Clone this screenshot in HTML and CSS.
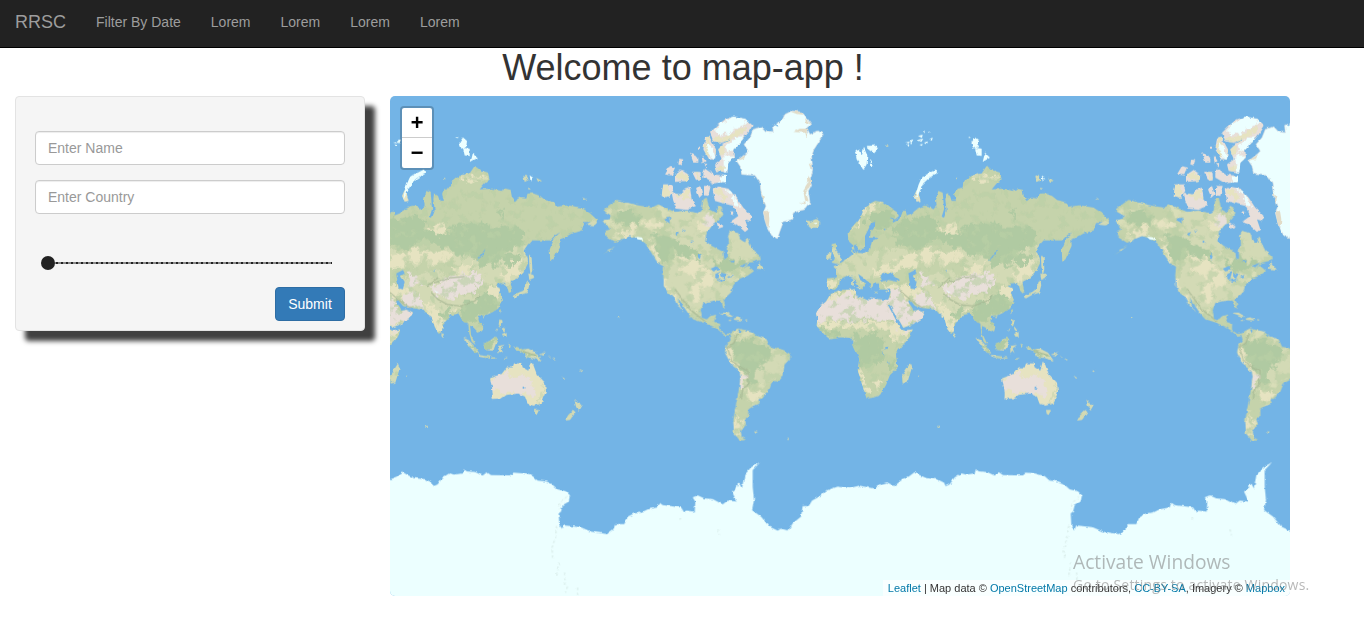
FILE: index.html
```html
<!DOCTYPE html>
<html lang="en">
<head>
<meta charset="utf-8">
<title>map-app</title>
<link rel="stylesheet" href="styles.css">
</head>
<body>
<nav class="navbar">
  <a class="brand">RRSC</a>
  <a class="nav-link">Filter By Date</a>
  <a class="nav-link">Lorem</a>
  <a class="nav-link">Lorem</a>
  <a class="nav-link">Lorem</a>
  <a class="nav-link">Lorem</a>
</nav>
<h1 class="title">Welcome to map-app !</h1>
<main class="content">
  <form class="well">
    <input class="field" type="text" placeholder="Enter Name">
    <input class="field" type="text" placeholder="Enter Country">
    <div class="slider"><div class="track"></div><div class="thumb"></div></div>
    <div class="actions"><button class="submit" type="button">Submit</button></div>
  </form>
  <section class="map">
    <svg class="world" width="900" height="500" viewBox="0 0 2700 1500">
      <defs>
        <filter id="coast" filterUnits="userSpaceOnUse" x="-30" y="-30" width="2760" height="1560" color-interpolation-filters="sRGB">
          <feTurbulence type="fractalNoise" baseFrequency="0.07" numOctaves="2" seed="4"/>
          <feDisplacementMap in="SourceGraphic" scale="10" xChannelSelector="R" yChannelSelector="G"/>
        </filter>
        <filter id="terrain" filterUnits="userSpaceOnUse" x="-100" y="100" width="1300" height="1000" color-interpolation-filters="sRGB">
          <feTurbulence type="fractalNoise" baseFrequency="0.04" numOctaves="4" seed="9"/>
          <feDisplacementMap in="SourceGraphic" scale="50" xChannelSelector="R" yChannelSelector="G"/>
        </filter>
        <filter id="islandTerrain" filterUnits="userSpaceOnUse" x="150" y="30" width="400" height="420" color-interpolation-filters="sRGB">
          <feTurbulence type="fractalNoise" baseFrequency="0.07" numOctaves="2" seed="3"/>
          <feDisplacementMap in="SourceGraphic" scale="20" xChannelSelector="R" yChannelSelector="G"/>
        </filter>
        <filter id="speckle" filterUnits="userSpaceOnUse" x="-50" y="180" width="1050" height="900" color-interpolation-filters="sRGB">
          <feTurbulence type="fractalNoise" baseFrequency="0.03" numOctaves="4" seed="21"/>
          <feColorMatrix values="0 0 0 0 .85  0 0 0 0 .87  0 0 0 0 .72  9 0 0 0 -4.95"/>
        </filter>
        <filter id="speckleGreen" filterUnits="userSpaceOnUse" x="-50" y="180" width="1050" height="900" color-interpolation-filters="sRGB">
          <feTurbulence type="fractalNoise" baseFrequency="0.035" numOctaves="4" seed="5"/>
          <feColorMatrix values="0 0 0 0 .73  0 0 0 0 .81  0 0 0 0 .65  9 0 0 0 -5"/>
        </filter>
        <path id="america" d="M40 345L55 330L80 312L110 320L145 328L185 335L205 325L225 335L255 348L290 345L325 352L335 345L340 310L350 305L358 340L375 350L385 330L395 335L400 355L385 375L365 390L350 410L345 435L365 450L400 468L402 488L412 490L412 455L418 445L415 420L420 405L445 412L450 430L465 440L472 425L480 445L490 465L510 480L512 492L480 500L462 516L474 510L492 525L472 540L450 547L430 567L425 587L400 610L408 638L400 634L392 614L370 614L340 620L332 642L335 665L350 670L362 660L378 657L372 677L390 684L390 702L405 714L420 712L430 704L445 697L485 707L500 720L530 730L540 752L580 762L600 774L600 787L582 807L580 842L545 862L535 887L515 909L505 909L508 922L490 930L475 940L475 962L462 970L468 985L452 1007L455 1024L468 1032L450 1034L432 1012L430 972L435 942L445 892L452 842L450 827L425 807L405 770L410 747L422 732L418 717L405 719L385 702L370 692L340 680L310 670L298 657L280 630L262 602L270 632L283 649L262 627L250 602L235 592L222 570L220 537L222 512L205 502L185 472L165 440L145 428L120 420L95 430L75 450L35 478L70 455L90 435L75 440L50 425L45 405L60 400L48 385L40 372L60 370L65 358Z"/>
        <path id="arctic" d="M360 110L385 85L405 70L430 62L465 68L488 88L475 110L450 140L430 160L432 185L415 200L412 230L380 225L375 205L395 190L385 160L400 145L370 135ZM345 125L358 122L378 160L375 190L358 190L340 160ZM340 230L345 218L370 235L408 240L408 258L370 262L340 245ZM225 235L240 210L255 215L245 238ZM255 235L275 222L298 238L290 255L255 258ZM220 265L245 265L250 285L235 305L215 300ZM245 290L270 295L285 280L300 275L305 310L318 330L290 342L260 338L250 315ZM318 280L330 270L338 295L328 305ZM342 270L362 270L355 300L342 298ZM368 280L385 272L415 278L440 305L460 335L485 360L480 375L465 370L475 400L465 408L440 385L420 378L445 360L430 330L400 322L375 315ZM380 378L402 392L385 398ZM300 170L325 185L325 200L310 200ZM268 188L280 190L275 208L265 205ZM306 228L332 228L332 250L318 252ZM335 178L347 195L338 202ZM324 152h6v6h-6ZM342 204L352 204L350 214ZM420 346L430 346L428 358Z"/>
        <path id="greenland" d="M440 195L465 175L475 165L462 145L480 125L490 100L515 92L530 108L550 110L548 88L575 75L585 55L605 45L635 48L650 65L665 85L650 95L660 115L685 105L700 115L685 140L672 160L665 180L668 225L660 250L665 265L655 285L660 320L645 340L610 350L605 370L580 378L570 405L562 428L545 418L530 390L520 350L528 330L515 300L510 260L495 238L455 235L450 210Z"/>
        <path id="antilles" d="M648 372L662 376L680 368L692 380L680 395L660 396ZM514 484L508 500L525 522L500 518ZM388 650L410 650L430 662L420 663L405 656ZM430 668L442 664L458 669L452 673L434 672ZM466 670h6v3h-6ZM416 672h8v3h-8ZM492 1006L504 1007L496 1012ZM592 1026h5v3h-5ZM84 662h4v4h-4ZM50 462L66 458L58 464ZM-12 386L2 378L14 372L22 380L10 388Z"/>
        <path id="eurasia" d="M143 410L160 392L180 368L190 345L205 325L225 315L248 318L270 335L290 348L297 360L285 370L268 362L280 380L295 372L305 360L308 345L318 345L320 358L335 352L350 340L372 330L385 330L400 340L410 330L408 310L415 285L428 290L430 310L432 340L425 362L432 365L440 345L436 310L438 293L450 300L455 315L468 315L463 295L470 278L488 275L490 258L515 240L545 232L560 210L575 222L600 230L605 250L590 262L575 280L610 278L640 285L650 277L668 282L672 305L680 315L695 305L715 308L719 293L736 292L756 300L771 312L801 320L804 332L841 328L881 335L906 352L928 372L921 388L906 378L889 378L881 403L851 412L826 426L814 430L815 450L796 490L787 497L785 460L800 425L818 408L801 418L786 433L731 433L716 450L706 465L718 480L720 502L706 530L691 544L667 557L673 587L663 592L657 570L646 560L631 562L624 572L640 578L632 590L641 612L631 637L606 652L589 659L574 659L571 672L586 692L583 705L571 710L556 694L546 690L549 717L563 747L551 737L544 712L541 682L526 677L511 652L491 657L466 682L461 707L453 714L441 697L431 662L416 652L406 640L366 636L345 630L330 612L324 616L336 634L340 644L355 642L375 650L365 667L340 684L310 695L300 677L280 647L270 625L264 628L285 667L300 697L312 704L338 700L330 722L305 752L288 772L292 817L270 837L258 867L240 897L222 904L200 907L190 877L173 822L178 787L160 747L160 730L140 724L120 724L90 730L70 712L50 690L52 667L48 652L60 632L78 617L92 594L120 582L165 580L165 597L205 614L215 604L235 610L265 612L272 587L270 580L240 580L235 562L222 562L215 577L205 557L190 544L174 533L180 552L195 564L185 580L172 562L158 544L140 540L120 550L118 567L105 580L82 580L80 547L110 544L112 524L100 512L120 502L140 490L158 475L155 452L160 448L145 435Z"/>
        <path id="ausislands" d="M606 847L641 834L656 814L674 814L678 802L701 802L704 814L721 824L728 797L736 807L746 834L771 860L774 887L761 922L736 929L718 922L711 902L691 892L656 897L641 907L614 909L614 882Z"/>
        <path id="islands" d="M95 445L108 442L108 460L115 475L125 490L115 502L95 500L105 485L98 470ZM80 475L95 468L92 488L78 490ZM723 475L731 485L733 520L728 540L724 510ZM721 532L736 537L739 545L724 552ZM718 554L724 567L718 590L696 597L678 607L674 600L691 590L706 584ZM633 642L639 640L636 652ZM634 670L644 674L638 694L632 686ZM642 714L656 708L656 722L646 722ZM642 694L652 698L650 706L644 702ZM626 702L632 695L626 708ZM586 662L593 660L588 668ZM461 710L468 718L464 725L460 720ZM526 725L541 732L561 752L574 772L561 770L546 754ZM571 777L606 782L606 788L576 783ZM610 784h12v4h-12ZM648 788L660 784L650 792ZM586 744L606 734L621 722L628 732L616 764L591 762ZM631 750L651 747L638 757L644 772L637 764L631 772ZM662 742L668 748L664 756ZM678 752L691 754L696 762L721 758L744 770L761 794L736 787L711 782L706 770L684 762ZM752 776L774 768L764 778ZM780 778l8 4l-2 3ZM792 786l12 5l-4 2ZM820 838L832 846L828 848ZM876 826L886 820L882 828ZM738 942L753 942L746 957L740 954ZM859 910L868 920L881 927L871 944L864 932ZM856 942L863 949L846 972L831 974L841 957ZM330 802L335 817L322 860L308 862L306 840ZM157 548h4l1 20h-6ZM168 576L184 574L180 582ZM222 588h12v3h-12ZM254 588L266 584L260 592ZM884 312L890 306L898 310ZM706 240L715 236L722 252L710 258ZM745 246L762 255L750 257ZM720 275L730 278L722 281ZM412 990h8v4h-8ZM354 840h4v2h-4ZM468 246h4v4h-4ZM256 148h6v4h-6ZM640 280h3v3h-3Z"/>
        <path id="ice" d="M165 165L180 158L185 180L192 155L202 178L200 205L190 222L180 205L170 190ZM200 150L225 148L235 158L222 172L205 160ZM210 190L222 208L215 212ZM346 312L350 285L356 265L365 245L385 232L408 220L412 230L385 248L370 262L360 285ZM514 140L525 124L537 135L535 152L520 158ZM525 155L545 158L545 180L530 178ZM555 170L570 185L548 198ZM315 140L330 136L326 142ZM330 132L340 130L333 144ZM318 148L328 144L326 152ZM354 120L368 116L366 126ZM352 132L370 128L364 138ZM372 140L384 136L380 146ZM388 130L398 124L396 134ZM358 146L368 144L366 150ZM370 104h4v4h-4ZM388 108h5v3h-5ZM506 123h5v3h-5ZM725 238L736 246L728 256Z"/>
        <clipPath id="clipAm"><use href="#america"/></clipPath>
        <clipPath id="clipEu"><use href="#eurasia"/><use href="#islands"/></clipPath>
        <clipPath id="clipAus"><use href="#ausislands"/></clipPath>
        <clipPath id="clipIsl"><use href="#arctic"/></clipPath>

        <g id="west">
          <use href="#america" class="plain"/>
          <g clip-path="url(#clipAm)">
            <rect width="700" height="1100" filter="url(#speckle)"/>
            <g filter="url(#terrain)">
              <path class="meadow" d="M230 350L345 335L360 460L300 480L240 420ZM400 400L500 440L500 500L400 500ZM230 500L340 490L440 550L410 600L330 640L230 600ZM520 750L600 790L580 850L480 860Z"/>
              <path class="sand" d="M262 475L300 465L340 500L370 550L355 575L320 560L270 520ZM330 350L380 390L345 430L320 400ZM300 575L330 560L325 620L300 605ZM222 540L250 590L290 650L270 640L225 580ZM470 885L520 880L510 930L480 930ZM428 960L445 970L445 1020L430 1010ZM155 375L200 380L210 400L170 390ZM95 400L140 390L130 415L95 420ZM170 430L190 440L220 500L200 500ZM410 740L440 800L475 840L450 900L445 830L405 790Z"/>
              <path class="forest" d="M80 350L120 340L150 360L140 385L95 390L75 375ZM180 420L230 420L300 460L340 470L330 500L260 470L230 500L210 480ZM355 490L450 490L470 510L400 530ZM425 750L450 725L500 740L540 760L530 800L490 830L500 860L475 865L470 830L435 800Z"/>
              <path class="desert" d="M450 832L466 835L464 870L452 880ZM340 355L378 355L370 385L345 380Z"/>
            </g>
            <rect class="faint" width="700" height="700" filter="url(#speckleGreen)"/>
            <path class="range" d="M442 712L432 740L412 755L425 795L445 810L474 826L472 870L458 876L454 910M255 580L300 640L345 676"/>
          </g>
          <use href="#arctic" class="desert"/>
          <g clip-path="url(#clipIsl)"><g filter="url(#islandTerrain)">
            <path class="sand" d="M360 125L400 125L440 105L470 90L460 110L400 140L370 135ZM345 125L360 125L365 190L345 175ZM255 230L300 230L300 260L260 250ZM215 265L235 265L240 310L210 300ZM260 290L300 280L300 300L280 310ZM380 150L405 150L402 175L380 180ZM370 280L390 275L410 300L400 320L390 300ZM312 228L325 228L330 250ZM380 215L405 210L400 228L380 225Z"/>
            <path class="ice" d="M375 105L395 80L430 60L475 72L465 88L430 100L415 118L400 110L390 122ZM440 125L465 120L440 160L405 172L415 145ZM400 178L432 178L418 205L412 235L402 225ZM350 140L370 155L375 188L358 190ZM388 240L412 238L410 262L390 260ZM425 300L435 300L450 335L435 330ZM403 278L420 280L428 295L415 290Z"/>
          </g></g>
          <path class="strait" d="M362 135Q400 150 420 130"/>
          <use href="#greenland" class="ice fringe"/>
          <path class="shore" d="M440 195L468 175L462 188ZM514 285L524 305L522 330ZM520 345L534 345L538 370L536 395L528 385ZM656 202L668 210L664 224ZM654 240L663 250L660 270L648 290L656 315L646 318L640 285L655 260ZM600 46L635 48L640 56L620 54ZM645 66L665 85L648 80ZM655 98L650 125L646 110L610 108L630 98ZM630 320L645 316L648 325Z"/>
          <use href="#antilles" class="meadow"/>
          <path class="ice" d="M670 382l12-2l-4 8ZM135 422l20 2l6 8l-18-2Z"/>
          <path class="sea" d="M222 372L232 366L246 366L238 374L240 382L230 376ZM256 412L268 408L260 420ZM276 404L288 402L278 408ZM324 474L332 480L330 490L324 484ZM302 434h5v6h-5ZM362 518L380 510L390 522L370 526ZM376 534L390 528L384 554L376 548ZM393 530L410 534L402 548L394 540ZM382 553L404 548L408 552L392 558ZM412 542L428 537L426 543L414 546ZM418 496L434 493L432 500ZM448 510L474 500L460 514ZM445 700L452 700L448 712ZM530 92L538 92L542 106L534 106ZM552 78L562 84L566 92L556 88Z"/>
        </g>

        <g id="east">
          <use href="#eurasia" class="plain"/>
          <use href="#islands" class="meadow"/>
          <g clip-path="url(#clipEu)">
            <g filter="url(#terrain)">
              <path class="meadow" d="M100 480L300 460L400 480L450 460L720 450L720 560L560 560L520 500L300 510L200 560L110 540ZM350 545L460 520L500 600L600 590L600 640L400 640L340 590Z"/>
              <path class="sand" d="M240 505L330 480L380 460L470 460L490 490L460 500L400 485L330 510L270 530L210 530ZM500 515L560 500L530 545L490 540ZM645 510L700 490L710 510L680 545L640 550ZM415 400L460 390L475 410L430 425ZM620 565L645 590L640 620L610 610L595 590ZM410 610L440 640L500 640L480 670L465 690L460 720L435 700L420 660ZM80 555L115 550L110 580L85 580ZM240 560L330 570L320 600L270 580ZM260 610L340 560L370 620L320 600ZM45 675L290 680L300 700L270 705L50 690ZM170 815L182 820L205 895L190 890ZM230 860L250 860L240 885ZM285 665L345 700L290 750L270 730ZM520 245L550 238L600 235L590 250L530 262ZM150 405L180 370L200 330L250 315L230 330L195 360L165 405Z"/>
              <path class="forest" d="M205 350L270 340L290 380L240 400L200 390ZM285 390L330 360L400 365L420 390L410 410L460 420L500 385L640 385L710 405L705 450L640 470L520 470L480 455L400 430L350 460L280 440ZM625 345L645 335L640 370ZM540 470L640 470L700 480L690 500L640 500L590 510L550 490ZM500 440L540 460L530 490L500 470ZM512 645L545 615L590 590L640 620L620 650L580 655L570 680L530 690ZM455 645L485 640L480 670L460 670ZM165 715L230 710L250 725L250 780L235 810L180 815L160 745ZM65 695L110 705L120 725L80 725ZM690 755L760 790L710 780ZM580 740L630 720L610 765ZM270 800L290 790L285 820L270 820ZM526 725L580 775L550 765Z"/>
              <path class="desert" d="M40 670L40 600L165 590L265 600L290 570L320 605L330 640L380 645L365 675L310 695L285 672L50 674ZM340 585L405 605L405 640L345 630ZM425 575L480 545L520 530L595 535L570 575L530 590L480 615L440 595ZM355 535L390 535L400 565L360 575ZM300 700L340 698L320 715Z"/>
              <path class="sand" d="M85 598L165 578L165 590L120 595L90 612Z"/>
            </g>
            <rect class="faint" width="1000" height="400" y="200" filter="url(#speckleGreen)"/>
            <path class="range" d="M430 590L450 610L480 626L520 630L560 615L575 600M440 560L490 545L530 542M415 575L450 545M300 585L345 622L370 637M700 765L745 778"/>
          </g>
          <use href="#ausislands" class="sand"/>
          <g clip-path="url(#clipAus)"><g filter="url(#terrain)">
            <path class="desert" d="M596 850L640 832L680 840L720 835L740 860L735 895L700 905L670 885L600 895Z"/>
            <path class="meadow" d="M770 870L776 900L760 930L745 925L765 895Z"/>
          </g></g>
          <path class="sand" d="M350 317L342 300L350 282L356 292L362 315ZM184 192h8v10h-8Z"/>
          <use href="#ice" class="ice"/>
          <path class="ice" d="M437 580l8 6l8 4l-8 0Z"/>
          <path class="sea" d="M215 376L226 375L222 392L212 405L210 425L236 425L216 435L210 460L190 472L172 470L176 462L195 456L195 420L205 400ZM160 448L170 445L175 462L168 472L164 460ZM240 547L250 530L262 536L280 530L278 538L297 552L290 557L265 552L245 558ZM325 532L345 522L350 532L338 540L350 557L345 580L332 577L328 552ZM592 458L586 478L565 494L580 476ZM256 752L266 750L264 758L256 760ZM246 765l4 16l-3-2ZM266 790l3 16l-4-4ZM436 526l5-6l-2 8ZM704 872h5v6h-5ZM158 460l6 0l0 10l-5 0ZM250 398l7 0l-2 6Z"/>
        </g>

        <g id="south">
          <path class="ice" d="M0 1150L22 1142L40 1128L55 1137L75 1146L108 1150L128 1160L133 1170L145 1165L160 1144L180 1132L195 1136L220 1132L224 1119L232 1126L258 1128L280 1139L292 1128L305 1137L362 1138L372 1130L400 1132L430 1140L445 1154L470 1156L485 1162L505 1180L530 1186L542 1198L538 1217L520 1227L515 1247L508 1252L510 1287L520 1300L525 1288L575 1294L605 1307L653 1314L672 1300L678 1284L705 1284L715 1262L735 1252L755 1250L775 1240L805 1234L810 1220L820 1227L875 1234L885 1250L890 1244L916 1247L918 1217L910 1204L925 1198L945 1207L970 1209L1000 1225L1015 1214L1042 1217L1028 1187L1040 1177L1048 1160L1058 1177L1065 1137L1085 1114L1112 1099L1090 1122L1090 1172L1094 1212L1088 1242L1115 1262L1140 1292L1165 1304L1175 1298L1197 1304L1210 1282L1235 1262L1240 1230L1258 1230L1268 1214L1290 1202L1310 1184L1345 1172L1380 1176L1410 1169L1455 1178L1475 1164L1493 1159L1515 1170L1540 1150V1540H0Z"/>
          <path class="ridge" d="M532 1202L512 1222L510 1240M502 1290L498 1325L488 1355L490 1385M508 1400L502 1440M526 1430L527 1460L535 1470L528 1490M565 1475V1498M986 1300L990 1318M870 1270L876 1266"/>
        </g>
      </defs>
      <rect class="sea" width="2700" height="1500"/>
      <g filter="url(#coast)">
        <use href="#east" x="-306"/>
        <use href="#west" x="600"/>
        <use href="#east" x="1230"/>
        <use href="#west" x="2136"/>
        <use href="#south" x="-2"/>
        <use href="#south" x="1534"/>
      </g>
    </svg>
    <div class="zoom"><a class="zoom-btn">+</a><a class="zoom-btn minus">−</a></div>
    <div class="attribution"><a>Leaflet</a> | Map data © <a>OpenStreetMap</a> contributors, <a>CC-BY-SA</a>, Imagery © <a>Mapbox</a></div>
  </section>
</main>
<aside class="activate"><div class="activate-title">Activate Windows</div><div class="activate-text">Go to Settings to activate Windows.</div></aside>
</body>
</html>
```
FILE: styles.css
```css
* { box-sizing: border-box; }
body {
  margin: 0;
  height: 627px;
  overflow: hidden;
  background: #fff;
  color: #333;
  font: 14px/20px "Liberation Sans", Arial, sans-serif;
}
.navbar {
  display: flex;
  height: 48px;
  padding-bottom: 3px;
  align-items: center;
  background: #222;
  border-bottom: 1px solid #000;
  color: #9d9d9d;
}
.brand { padding: 0 15px; font-size: 18px; }
.nav-link { padding: 0 15px; }
.title {
  margin: 0;
  height: 48px;
  padding-left: 2px;
  text-align: center;
  font-size: 36px;
  font-weight: 400;
  line-height: 39px;
}
.content { display: flex; gap: 25px; padding-left: 15px; align-items: flex-start; }
.well {
  width: 350px;
  height: 235px;
  padding: 34px 19px 0;
  background: #f5f5f5;
  border: 1px solid #e3e3e3;
  border-radius: 4px;
  box-shadow: 10px 10px 5px #404040;
}
.field {
  display: block;
  width: 100%;
  height: 34px;
  margin: 0 0 15px;
  padding: 6px 12px;
  border: 1px solid #ccc;
  border-radius: 4px;
  background: #fff;
  box-shadow: inset 0 1px 1px rgba(0, 0, 0, .075);
  font: inherit;
}
.field::placeholder { color: #999; opacity: 1; }
.slider { display: flex; align-items: center; height: 14px; margin: 42px 13px 0 6px; }
.thumb { width: 14px; height: 14px; border-radius: 50%; background: #222; order: 1; }
.track {
  order: 2;
  flex: 1;
  height: 2px;
  background: repeating-linear-gradient(90deg, #888 0 1px, #222 1px 3px, #888 3px 5px);
}
.actions { display: flex; justify-content: flex-end; margin-top: 17px; }
.submit {
  width: 70px;
  height: 34px;
  padding: 0;
  border: 1px solid #2e6da4;
  border-radius: 4px;
  background: #337ab7;
  color: #fff;
  font: inherit;
}
.map { position: relative; width: 900px; height: 500px; overflow: hidden; border-radius: 5px; }
.world { display: block; }
.sea { fill: #73b4e6; }
.plain { fill: #c5d3ab; }
.meadow { fill: #d3dab5; }
.forest { fill: #b0caa2; }
.sand { fill: #e6e3c1; }
.shore { fill: #e2dcc8; }
.desert { fill: #e8dfda; }
.ice { fill: #ecffff; }
.faint { opacity: .65; }
.fringe { stroke: #dfe0df; stroke-width: 2; }
.strait { fill: none; stroke: #73b4e6; stroke-width: 3; }
.range { fill: none; stroke: #a4b592; stroke-width: 4; opacity: .7; }
.ridge { fill: none; stroke: #d4e8e4; stroke-width: 3; stroke-dasharray: 7 8; }
.zoom {
  position: absolute;
  top: 10px;
  left: 10px;
  width: 34px;
  border: 2px solid rgba(0, 0, 0, .2);
  border-radius: 4px;
  background: #fff;
  background-clip: padding-box;
}
.zoom-btn {
  display: block;
  height: 30px;
  border-bottom: 1px solid #ccc;
  color: #000;
  font: bold 22px/34px "Liberation Mono", monospace;
  text-align: center;
}
.minus { border-bottom: 0; line-height: 33px; }
.attribution {
  position: absolute;
  right: 0;
  bottom: 0;
  padding: 0 5px;
  background: rgba(255, 255, 255, .7);
  font-size: 11px;
  line-height: 16px;
  white-space: nowrap;
}
.attribution a { color: #0078a8; }
.activate {
  position: absolute;
  left: 1073px;
  top: 549px;
  color: rgba(125, 125, 125, .55);
  font-family: "Open Sans", sans-serif;
  white-space: nowrap;
}
.activate-title { font-size: 19.2px; line-height: 25px; }
.activate-text { font-size: 14px; line-height: 22px; letter-spacing: .2px; }
```
